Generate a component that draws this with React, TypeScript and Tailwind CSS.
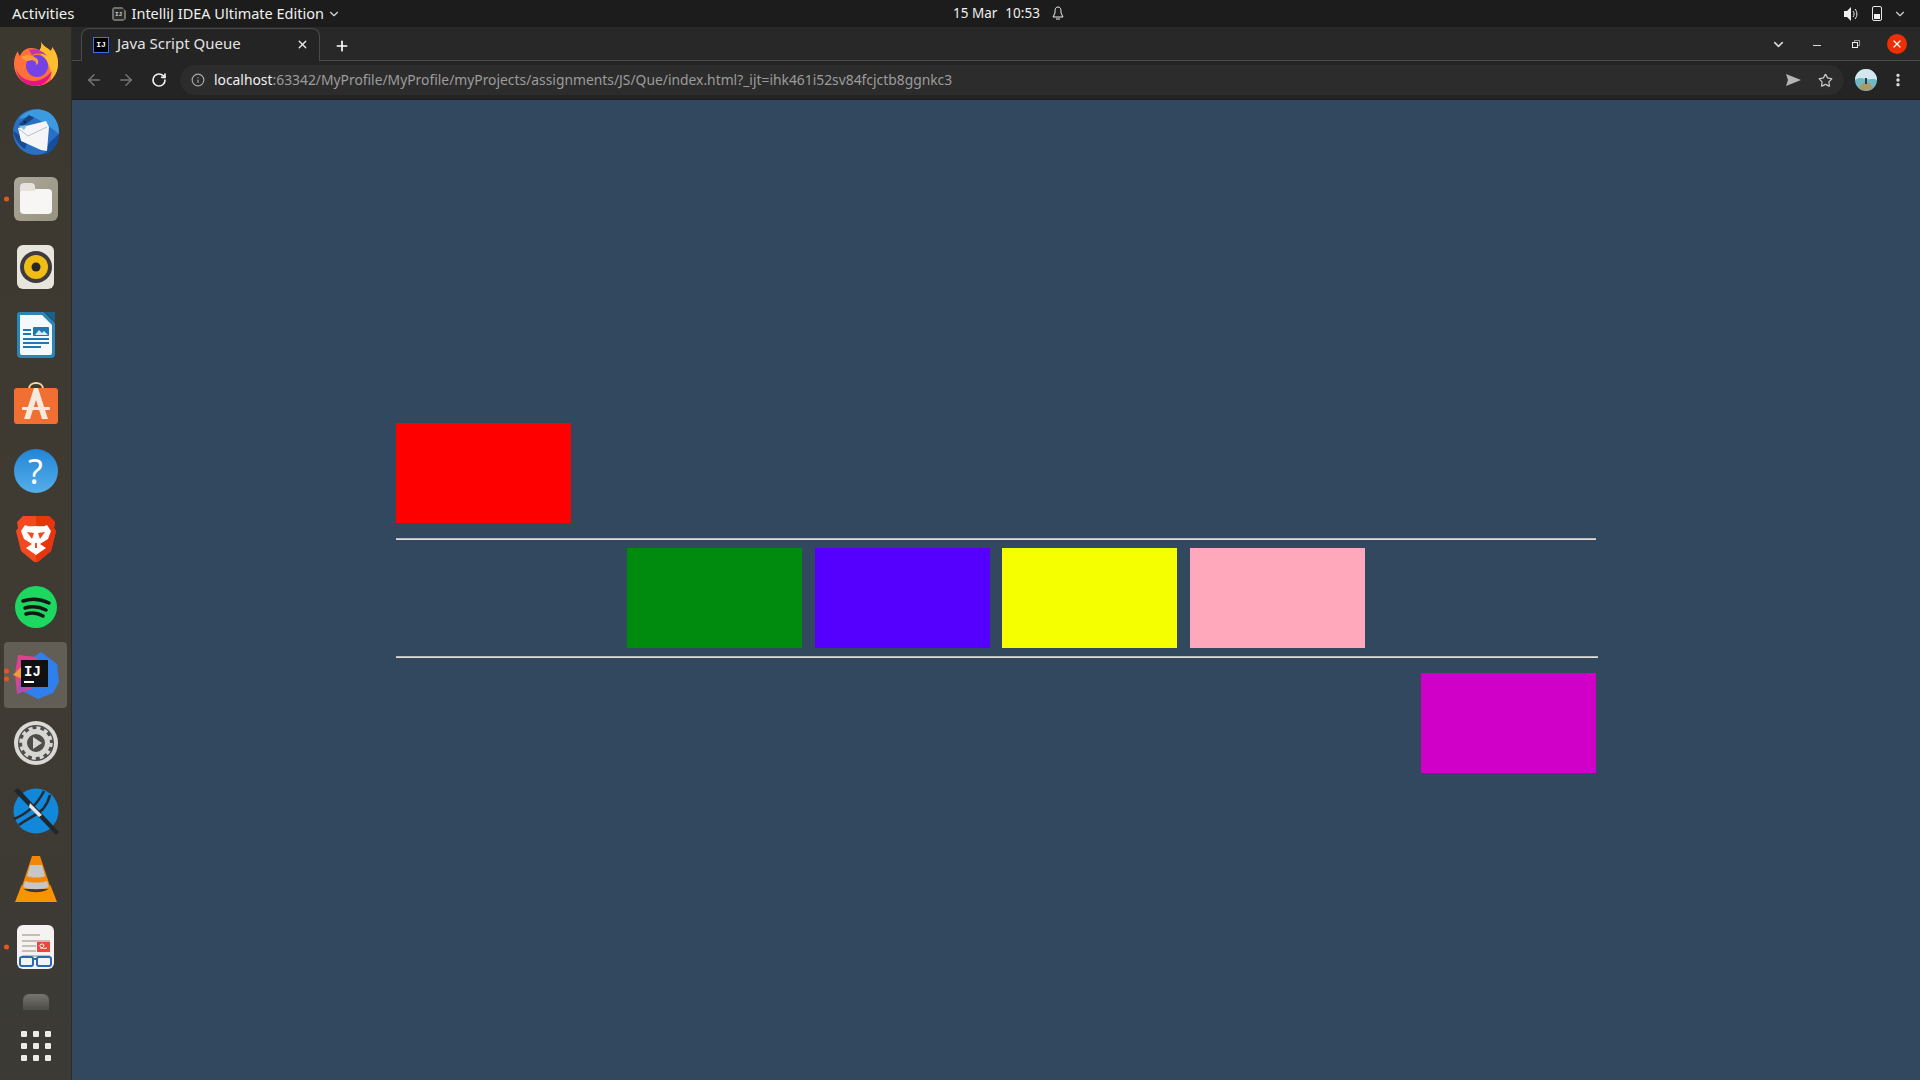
import { ArrowLeft, ArrowRight, ChevronDown, Info, MoreVertical, Plus, RotateCw, Star, X } from "lucide-react";

const uiFont = { fontFamily: '"Noto Sans", "Open Sans", sans-serif' };

function Firefox() {
  return (
    <svg width="46" height="48" viewBox="0 0 46 48">
      <path d="M28 2c1 5 6 6 10 10 1-2 1-3 1-4 4 5 6 10 6 17 0 12-10 22-22 22S1 37 1 25c0-5 1-9 4-13 0 2 1 4 2 5 2-5 6-8 11-8 4 0 7 1 9 3 2-4 2-7 1-10z" fill="#ff7139" />
      <path d="M28 2c1 5 6 6 10 10 1-2 1-3 1-4 4 5 6 10 6 17 0 6-3 12-7 16 1-8-1-19-13-28 3-3 4-7 3-11z" fill="#ffbd30" />
      <path d="M3 30c4 10 14 14 24 11 5-2 9-5 12-9-2 9-9 15-17 15-9 0-17-7-19-17z" fill="#e31587" />
      <circle cx="24" cy="27" r="11" fill="#7542e5" />
      <path d="M8 18c5-3 12-2 15 1 3 2 3 6 0 7 1-4-4-6-8-4-3 0-5-2-7-4z" fill="#ff9a3c" />
      <path d="M16 11c5-2 14 0 18 6-5-3-11-3-15-1z" fill="#c332b8" />
    </svg>
  );
}

function Thunderbird() {
  return (
    <svg width="48" height="48" viewBox="0 0 48 48">
      <circle cx="24" cy="25" r="23" fill="#2a6fc4" />
      <path d="M7 12C14 1 32-1 41 9c5 6 6 12 6 18L34 17 20 9z" fill="#3b9ae0" />
      <path d="M33 48c8-3 14-12 14-21l-10 9-3 6z" fill="#134f9e" />
      <path d="M1 24c2 8 6 14 12 18l3-9z" fill="#174a8f" />
      <path d="M6 21l28-7 3 6-2 24-6-1-20-9z" fill="#f5f5f7" />
      <path d="M7 22l9 7 19-9" fill="none" stroke="#b9c0c8" strokeWidth="1" />
      <path d="M7 17l10-9 5 3-12 9z" fill="#16457f" />
      <path d="M7 19l5 4 3-5z" fill="#7fc6d8" />
      <circle cx="13" cy="15" r="1.300" fill="#0d2a4f" />
    </svg>
  );
}

function Files() {
  return (
    <div className="flex h-11 w-11 items-center justify-center rounded-md bg-gradient-to-br from-[#aba79a] to-[#98937f]">
      <div className="relative mt-1 h-[25px] w-8 rounded-sm bg-[#f8f6f5]">
        <div className="absolute -top-[6px] left-0 h-2 w-[15px] rounded-t-sm bg-[#e6e2dc]" />
      </div>
    </div>
  );
}

function Rhythmbox() {
  return (
    <div className="flex h-11 w-[37px] items-center justify-center rounded-md bg-[#e8e5dc]">
      <svg width="34" height="34" viewBox="0 0 34 34">
        <circle cx="17" cy="17" r="16" fill="#3d3b3f" />
        <circle cx="17" cy="17" r="12" fill="#f0bd14" />
        <circle cx="17" cy="17" r="4.500" fill="#282627" />
      </svg>
    </div>
  );
}

function Writer() {
  return (
    <svg width="38" height="46" viewBox="0 0 38 46">
      <path d="M3 0h24l11 11v31a4 4 0 0 1-4 4H4a4 4 0 0 1-4-4V3a3 3 0 0 1 3-3z" fill="#2a85b8" />
      <path d="M3 3h22l10 10v28a2 2 0 0 1-2 2H5a2 2 0 0 1-2-2z" fill="#f6f9fb" />
      <path d="M28 0h10v10z" fill="#17618f" />
      <path d="M6 17h8v2H6zM6 21h8v2H6zM6 26h26v2H6zM6 30h26v2H6zM6 34h18v2H6z" fill="#1b79b3" />
      <rect x="16" y="15" width="16" height="9" rx="1" fill="#1b79b3" />
      <path d="M18 23l4-5 3 3 2-2 4 4z" fill="#dbeaf3" />
    </svg>
  );
}

function Software() {
  return (
    <svg width="44" height="42" viewBox="0 0 44 42">
      <path d="M15 7c0-8 14-8 14 0" fill="none" stroke="#f4d9a8" strokeWidth="2" />
      <rect y="6" width="44" height="36" rx="3" fill="#f26f33" />
      <path d="M20 6h4l10 31h-6l-6-19-6 19h-6z" fill="#f8e9dd" />
      <rect x="8" y="25" width="28" height="3" rx="1" fill="#f8e9dd" />
    </svg>
  );
}

function Help() {
  return (
    <div className="flex h-11 w-11 items-center justify-center rounded-full bg-gradient-to-b from-[#2185d6] to-[#53aeea] text-[34px] leading-none text-white" style={uiFont}>
      ?
    </div>
  );
}

function Brave() {
  return (
    <svg width="42" height="48" viewBox="0 0 42 48">
      <path d="M8 1h26l6 6-1 6 2 3-5 20-12 10a4 4 0 0 1-6 0L6 36 1 16l2-3-1-6z" fill="#f4481e" />
      <path d="M21 47V1h13l6 6-1 6 2 3-5 20-12 10z" fill="#e8350e" />
      <path d="M21 11c-4 0-8 1-11-1l-4 6 3 8 8 5-6 4 10 7 10-7-6-4 8-5 3-8-4-6c-3 2-7 1-11 1z" fill="#fff" />
      <path d="M19 18l-7-1 5 7zM23 18l7-1-5 7zM20 28h2v5h-2z" fill="#f4481e" />
    </svg>
  );
}

function Spotify() {
  return (
    <svg width="42" height="42" viewBox="0 0 42 42">
      <circle cx="21" cy="21" r="21" fill="#1ed760" />
      <path d="M8 15c9-3 18-2 26 2M10 22c7-2 15-1 21 2M11 28c6-2 12-1 17 2" fill="none" stroke="#151515" strokeWidth="3.500" strokeLinecap="round" />
    </svg>
  );
}

function Idea() {
  return (
    <svg width="46" height="48" viewBox="0 0 46 48">
      <path d="M28 1l16 12 2 18-6 11-15 6-14-7 8-34z" fill="#2f80ed" />
      <path d="M5 4l18 2 8 14-13 18-14 5-2-20z" fill="#e0418f" />
      <path d="M0 24l8-8 6 14z" fill="#f29b32" />
      <path d="M4 43l3-15 12 6z" fill="#9b55b4" />
      <rect x="8" y="9" width="27" height="27" fill="#111" />
      <rect x="11" y="30" width="10" height="2" fill="#fff" />
      <text x="11" y="25" fill="#fff" fontSize="14" fontWeight="700" fontFamily="Liberation Mono, monospace">IJ</text>
    </svg>
  );
}

function Settings() {
  return (
    <svg width="46" height="46" viewBox="0 0 46 46">
      <circle cx="23" cy="23" r="22" fill="#dbd9d5" />
      <circle cx="23" cy="23" r="18" fill="#4f4d4c" />
      <circle cx="23" cy="23" r="11.500" fill="none" stroke="#d8d6d2" strokeWidth="5" />
      <circle cx="23" cy="23" r="15" fill="none" stroke="#d8d6d2" strokeWidth="3.500" strokeDasharray="4 3.85" />
      <path d="M20 17l9 6-9 6z" fill="#d8d6d2" />
    </svg>
  );
}

function Inkscape() {
  return (
    <svg width="48" height="48" viewBox="0 0 48 48">
      <circle cx="24" cy="24" r="22.500" fill="#1288da" />
      <path d="M2 32c10-4 22-12 30-28M7 38c8-6 18-10 24-16 4-5 6-10 7-14" fill="none" stroke="#252a30" strokeWidth="2.500" />
      <path d="M2 4l4-3 41 44-3 3z" fill="#22272c" />
      <path d="M18 16l6 6 6 6-3 2-10-10z" fill="#e4e8ea" />
    </svg>
  );
}

function Vlc() {
  return (
    <svg width="42" height="46" viewBox="0 0 42 46">
      <path d="M17 0h8l11 33H6z" fill="#f28705" />
      <path d="M15 9h12l3 11c-4 2-13 2-18 0z" fill="#c7c7c7" />
      <path d="M10 25c5 2 17 2 22 0l2 6c-6 3-20 3-26 0z" fill="#c7c7c7" />
      <path d="M7 28L0 46h42l-7-18c3 11-31 11-28 0z" fill="#f79400" />
    </svg>
  );
}

function Reader() {
  return (
    <div className="relative h-11 w-[37px] rounded-md bg-[#f4f3f1]">
      <svg className="absolute inset-0" width="37" height="44" viewBox="0 0 37 44">
        <path d="M5 9h18v2H5zM5 15h28v2H5zM5 20h14v2H5zM5 25h14v2H5zM5 30h28v2H5z" fill="#c4bfb4" />
        <rect x="20" y="17" width="13" height="10" fill="#e8473c" />
        <path d="M23 23c3 1 6-4 2-4s-2 6 5 4" fill="none" stroke="#fff" />
        <rect x="3" y="32" width="13" height="9" rx="2" fill="none" stroke="#2968b5" strokeWidth="2" />
        <rect x="20" y="32" width="14" height="9" rx="2" fill="none" stroke="#2968b5" strokeWidth="2" />
        <path d="M16 34h4" stroke="#2968b5" strokeWidth="2" />
      </svg>
    </div>
  );
}

function Dock() {
  const items = [
    { key: "firefox", el: <Firefox /> },
    { key: "thunderbird", el: <Thunderbird /> },
    { key: "files", el: <Files />, dot: 1 },
    { key: "rhythmbox", el: <Rhythmbox /> },
    { key: "writer", el: <Writer /> },
    { key: "software", el: <Software /> },
    { key: "help", el: <Help /> },
    { key: "brave", el: <Brave /> },
    { key: "spotify", el: <Spotify /> },
    { key: "idea", el: <Idea />, dot: 2, active: true },
    { key: "settings", el: <Settings /> },
    { key: "inkscape", el: <Inkscape /> },
    { key: "vlc", el: <Vlc /> },
    { key: "reader", el: <Reader />, dot: 1 },
  ];

  return (
    <aside className="flex w-[72px] shrink-0 flex-col border-r border-[#2a2a28] bg-gradient-to-b from-[#3b382f] via-[#3f3b32] to-[#3c3a35] pt-[2px]">
      {items.map((item) => (
        <div key={item.key} className="relative flex h-[68px] items-center justify-center">
          {item.active && <div className="absolute inset-x-1 top-px bottom-px rounded bg-[#625e55]" />}
          {item.dot === 1 && <span className="absolute left-1 top-1/2 h-[5px] w-[5px] -translate-y-1/2 rounded-full bg-[#e95420]" />}
          {item.dot === 2 && (
            <span className="absolute left-1 top-1/2 flex -translate-y-1/2 flex-col gap-[3px]">
              <span className="h-[5px] w-[5px] rounded-full bg-[#e95420]" />
              <span className="h-[5px] w-[5px] rounded-full bg-[#e95420]" />
            </span>
          )}
          <div className="relative flex items-center justify-center">{item.el}</div>
        </div>
      ))}
      <div className="flex flex-1 flex-col items-center justify-between pb-[19px]">
        <div className="mt-[13px] h-4 w-[26px] rounded-t-md bg-gradient-to-b from-[#77756f] to-[#4c4b47]" />
        <div className="grid grid-cols-3 gap-[6px]">
          {[1, 2, 3, 4, 5, 6, 7, 8, 9].map((n) => (
            <span key={n} className="h-[6px] w-[6px] rounded-[1px] bg-[#ecebe9]" />
          ))}
        </div>
      </div>
    </aside>
  );
}

function TopBar() {
  return (
    <header className="relative flex h-[27px] shrink-0 items-center justify-between bg-[#1c1c1c] text-[#f0f0ee]" style={uiFont}>
      <div className="flex items-center">
        <span className="pl-3 text-[15px]">Activities</span>
        <svg className="ml-[36px]" width="16" height="16" viewBox="0 0 16 16">
          <path d="M3 1h8l4 4v8l-3 2H3l-2-2V3z" fill="#6f6f6c" />
          <rect x="3" y="3" width="10" height="10" fill="#2b2b2b" />
          <text x="4" y="10" fill="#d0d0d0" fontSize="6" fontWeight="700" fontFamily="Liberation Mono, monospace">IJ</text>
        </svg>
        <span className="ml-[5px] text-[14.5px]">IntelliJ IDEA Ultimate Edition</span>
        <ChevronDown size={14} className="ml-[3px] text-[#d8d8d6]" />
      </div>
      <div className="absolute left-[953px] flex items-center text-[13.5px]">
        <span>15 Mar</span>
        <span className="ml-2">10:53</span>
        <svg className="ml-[12px]" width="12" height="15" viewBox="0 0 12 15">
          <path d="M6 1c3 0 3 3 3 6l2 4H1l2-4c0-3 0-6 3-6zM4 13h4" fill="none" stroke="#eee" strokeWidth="1" />
        </svg>
      </div>
      <div className="flex items-center pr-[13px]">
        <svg width="16" height="16" viewBox="0 0 16 16">
          <path d="M1 5h3l4-4v14l-4-4H1z" fill="#f0f0ee" />
          <path d="M10 5c1.500 2 1.500 4 0 6M12 3c2.500 3 2.500 7 0 10" fill="none" stroke="#f0f0ee" />
        </svg>
        <span className="relative ml-[13px] h-[15px] w-[10px] rounded-[2px] border border-[#e8e8e6]">
          <span className="absolute inset-x-px bottom-px h-[5px] bg-[#f0f0ee]" />
        </span>
        <ChevronDown size={14} className="ml-[11px] text-[#cfcfcd]" />
      </div>
    </header>
  );
}

function TabStrip() {
  return (
    <div className="flex h-[34px] shrink-0 items-end border-b border-[#4a4a4a] bg-[#282828]">
      <div className="-mb-px ml-[9px] flex h-[33px] w-[239px] items-center rounded-t-lg border border-b-0 border-[#4a4a4a] bg-[#242424] pb-px pl-[11px] pr-[10px]">
        <span className="flex h-4 w-4 items-center justify-center border border-[#3a6ff0] bg-black font-mono text-[8px] font-bold leading-none text-white">IJ</span>
        <span className="-mt-[2px] ml-2 flex-1 text-[15px] text-[#e3e3e3]" style={uiFont}>Java Script Queue</span>
        <X size={13} strokeWidth={2.5} className="text-[#e8e8e8]" />
      </div>
      <Plus size={16} strokeWidth={2.5} className="mb-[6px] ml-[14px] text-white" />
      <div className="mb-[6px] ml-auto flex items-center pr-[13px] text-[#d8d8d8]">
        <ChevronDown size={15} strokeWidth={2.5} />
        <span className="ml-[27px] mt-[3px] h-px w-[8px] bg-[#d8d8d8]" />
        <span className="relative ml-[31px] h-2 w-2">
          <span className="absolute right-0 top-0 h-[6px] w-[6px] border border-[#999]" />
          <span className="absolute bottom-0 left-0 h-[6px] w-[6px] border border-[#eee] bg-[#282828]" />
        </span>
        <span className="ml-[27px] flex h-5 w-5 items-center justify-center rounded-full bg-[#ee2f05]">
          <X size={12} strokeWidth={2.5} className="text-white" />
        </span>
      </div>
    </div>
  );
}

function Toolbar() {
  return (
    <div className="flex h-[39px] shrink-0 items-center border-b border-[#1a1a1a] bg-[#242424] pl-[13px] pr-[14px]">
      <ArrowLeft size={18} strokeWidth={2} className="text-[#757575]" />
      <ArrowRight size={18} strokeWidth={2} className="ml-[14px] text-[#757575]" />
      <RotateCw size={16} strokeWidth={2.5} className="ml-[16px] text-[#f0f0f0]" />
      <div className="ml-[13px] flex h-[30px] flex-1 items-center rounded-full bg-[#2c2c2c] pl-[11px] pr-[11px]">
        <Info size={14} className="text-[#a8a8a8]" />
        <div className="ml-[9px] flex-1 text-[13.85px] text-[#9c9c9c]" style={uiFont}>
          <span className="text-[#f0f0f0]">localhost</span>:63342/MyProfile/MyProfile/myProjects/assignments/JS/Que/index.html?_ijt=ihk461i52sv84fcjctb8ggnkc3
        </div>
        <svg width="15" height="12" viewBox="0 0 15 12">
          <path d="M0 0l15 6-15 6 2-6z" fill="#b5b5b5" />
        </svg>
        <Star size={15} strokeWidth={2} className="ml-[17px] text-[#c8c8c8]" />
      </div>
      <svg className="ml-[11px]" width="22" height="22" viewBox="0 0 22 22">
        <circle cx="11" cy="11" r="11" fill="#6fb9c6" />
        <path d="M0 11a11 11 0 0 1 22 0c-4-2-6 0-11-1S4 8 0 11z" fill="#d3e7ee" />
        <path d="M4 19l3-5h8l3 5a11 11 0 0 1-14 0z" fill="#a89a69" />
        <path d="M10 9h2v6h-2z" fill="#2a3b42" />
      </svg>
      <MoreVertical size={16} strokeWidth={3} className="ml-[13px] text-[#e8e8e8]" />
    </div>
  );
}

function Box({ color }: { color: string }) {
  return <div className={`h-[100px] w-[175px] ${color}`} />;
}

function QueuePage() {
  return (
    <main className="flex-1 bg-[#32485f] pl-[324px] pt-[323px]">
      <div className="w-[1200px]">
        <Box color="bg-[#ff0000]" />
        <div className="mt-[15px] h-[2px] bg-gradient-to-b from-[#aaaaaa] to-[#f0f0f0]" />
        <div className="mt-[8px] flex gap-[12.5px] pl-[231px]">
          <Box color="bg-[#008b0e]" />
          <Box color="bg-[#5500ff]" />
          <Box color="bg-[#f6ff00]" />
          <Box color="bg-[#ffa8bc]" />
        </div>
        <div className="-mr-[2px] mt-[8px] h-[2px] bg-gradient-to-b from-[#aaaaaa] to-[#f0f0f0]" />
        <div className="mt-[15px] flex justify-end">
          <Box color="bg-[#d000c8]" />
        </div>
      </div>
    </main>
  );
}

export default function App() {
  return (
    <div className="flex h-[1080px] w-[1920px] flex-col overflow-hidden">
      <TopBar />
      <div className="flex min-h-0 flex-1">
        <Dock />
        <div className="flex min-w-0 flex-1 flex-col">
          <TabStrip />
          <Toolbar />
          <QueuePage />
        </div>
      </div>
    </div>
  );
}
